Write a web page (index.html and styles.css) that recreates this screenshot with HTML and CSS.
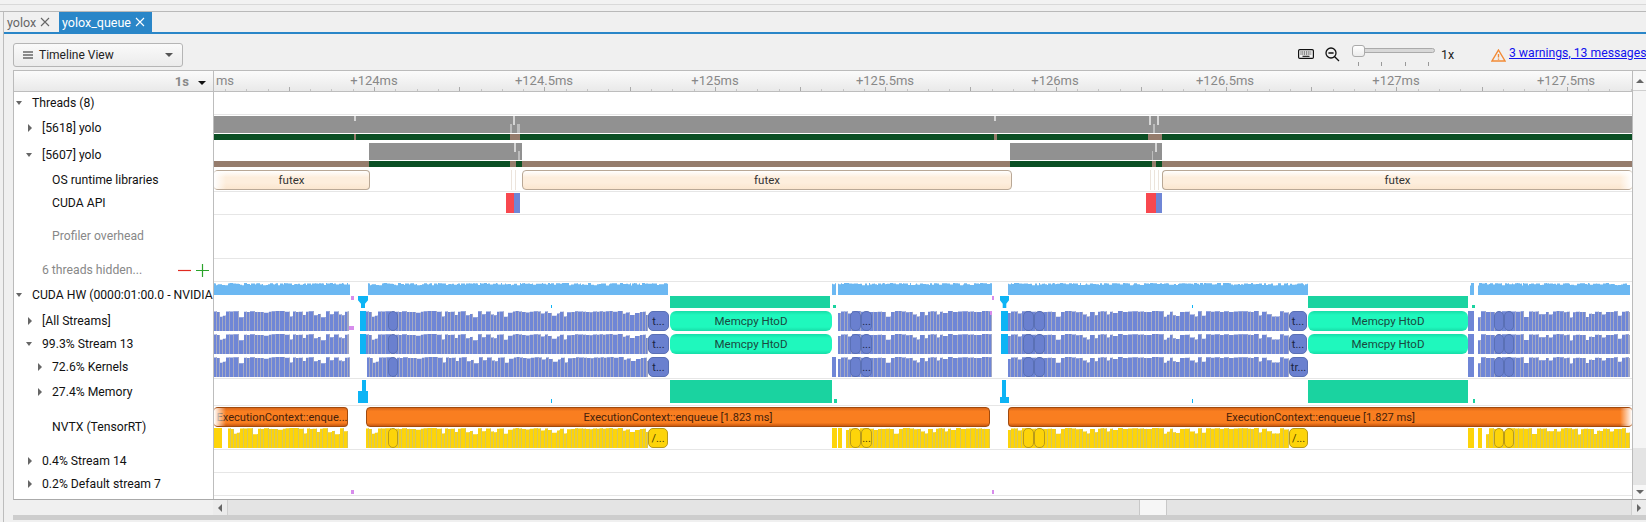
FILE: index.html
```html
<!DOCTYPE html>
<html lang="en">
<head>
<meta charset="utf-8">
<title>yolox_queue - Timeline View</title>
<link rel="stylesheet" href="styles.css">
</head>
<body>
<div class="topstrip"></div>
<div class="frame">
  <div class="tabs">
    <div class="tab">yolox <svg class="tabx" viewBox="0 0 10 10"><path d="M1 1L9 9M9 1L1 9"/></svg></div>
    <div class="tab active">yolox_queue <svg class="tabx" viewBox="0 0 10 10"><path d="M1 1L9 9M9 1L1 9"/></svg></div>
  </div>
  <div class="toolbar">
    <div class="dropdown">
      <svg class="burger" viewBox="0 0 10 8"><path d="M0 1H10M0 4H10M0 7H10"/></svg>
      <span class="dropdown-text">Timeline View</span>
      <span class="dropdown-caret"></span>
    </div>
    <div class="tools">
      <svg class="kbd" viewBox="0 0 16 10"><rect x=".6" y=".6" width="14.8" height="8.8" rx="1.2"/><path class="keys" d="M2.5 3H13.5M2.5 5H13.5"/><path class="keys solid" d="M4.5 7.3H11.5"/></svg>
      <svg class="zoomout" viewBox="0 0 15 15"><circle cx="6" cy="6" r="5"/><path d="M3.4 6H8.6M9.7 9.7L14 14"/></svg>
      <div class="slider">
        <div class="slider-track"></div>
        <div class="slider-thumb"></div>
        <div class="slider-ticks"><i></i><i></i><i></i><i></i></div>
      </div>
      <span class="zoomval">1x</span>
      <svg class="warn" viewBox="0 0 15 13"><path d="M7.5 1L14 12H1Z"/><path d="M7.5 5V8.6M7.5 9.6V10.8"/></svg>
      <a class="msglink" href="#">3 warnings, 13 messages</a>
    </div>
  </div>
  <div class="panel">
    <div class="content">
      <div class="header">
        <div class="scale"><b>1s</b><span class="scale-caret"></span></div>
        <div class="ruler" id="ruler">
          <span class="rlabel" data-center="225">ms</span>
          <span class="rlabel" data-center="374">+124ms</span>
          <span class="rlabel" data-center="544">+124.5ms</span>
          <span class="rlabel" data-center="715">+125ms</span>
          <span class="rlabel" data-center="885">+125.5ms</span>
          <span class="rlabel" data-center="1055">+126ms</span>
          <span class="rlabel" data-center="1225">+126.5ms</span>
          <span class="rlabel" data-center="1396">+127ms</span>
          <span class="rlabel" data-center="1566">+127.5ms</span>
        </div>
      </div>

      <div class="rows">
        <div class="row h23">
          <div class="label l0"><span class="caret down"></span>Threads (8)</div>
          <div class="lane ruled"></div>
        </div>

        <div class="row h27">
          <div class="label l1"><span class="caret right"></span>[5618] yolo</div>
          <div class="lane">
            <div class="track t17 gap">
              <span class="seg grey" data-from="214" data-to="1632"></span>
              <span class="seg notch half" data-from="354" data-to="356"></span>
              <span class="seg notch low" data-from="510" data-to="512"></span>
              <span class="seg notch" data-from="513" data-to="515"></span>
              <span class="seg notch low" data-from="517" data-to="520"></span>
              <span class="seg notch half" data-from="994" data-to="996"></span>
              <span class="seg notch" data-from="1149" data-to="1151"></span>
              <span class="seg notch low" data-from="1153" data-to="1155"></span>
              <span class="seg notch" data-from="1157" data-to="1159"></span>
            </div>
            <div class="track t6">
              <span class="seg dgreen" data-from="214" data-to="1632"></span>
              <span class="seg brown" data-from="354" data-to="356"></span>
              <span class="seg brown" data-from="510" data-to="520"></span>
              <span class="seg brown" data-from="994" data-to="997"></span>
              <span class="seg brown" data-from="1148" data-to="1162"></span>
            </div>
          </div>
        </div>

        <div class="row h27">
          <div class="label l1"><span class="caret down"></span>[5607] yolo</div>
          <div class="lane">
            <div class="track t17 gap">
              <span class="seg grey" data-from="369" data-to="522"></span>
              <span class="seg notch" data-from="514" data-to="516"></span>
              <span class="seg notch low" data-from="518" data-to="520"></span>
              <span class="seg grey" data-from="1010" data-to="1162"></span>
              <span class="seg notch low" data-from="1152" data-to="1153"></span>
              <span class="seg notch" data-from="1155" data-to="1157"></span>
            </div>
            <div class="track t6">
              <span class="seg brown" data-from="214" data-to="1632"></span>
              <span class="seg dgreen" data-from="369" data-to="522"></span>
              <span class="seg dgreen" data-from="1010" data-to="1162"></span>
              <span class="seg brown" data-from="510" data-to="516"></span>
              <span class="seg brown" data-from="1152" data-to="1156"></span>
            </div>
          </div>
        </div>

        <div class="row h23">
          <div class="label l2"><span class="caret"></span>OS runtime libraries</div>
          <div class="lane ruled">
            <div class="track t20">
              <span class="seg futex fade-l" data-from="214" data-to="370">futex</span>
              <span class="seg futex" data-from="522" data-to="1012">futex</span>
              <span class="seg futex fade-r" data-from="1162" data-to="1632">futex</span>
              <span class="seg faint" data-from="511" data-to="512"></span>
              <span class="seg faint" data-from="515" data-to="516"></span>
              <span class="seg faint" data-from="1150" data-to="1151"></span>
              <span class="seg faint" data-from="1154" data-to="1155"></span>
              <span class="seg faint" data-from="1158" data-to="1159"></span>
            </div>
          </div>
        </div>

        <div class="row h23">
          <div class="label l2"><span class="caret"></span>CUDA API</div>
          <div class="lane ruled">
            <div class="track t20">
              <span class="seg red" data-from="506" data-to="514"></span>
              <span class="seg kblue" data-from="514" data-to="520"></span>
              <span class="seg red" data-from="1146" data-to="1156"></span>
              <span class="seg kblue" data-from="1156" data-to="1162"></span>
            </div>
          </div>
        </div>

        <div class="row h44">
          <div class="label l2 dim"><span class="caret"></span>Profiler overhead</div>
          <div class="lane ruled"></div>
        </div>

        <div class="row h23">
          <div class="label l1 dim"><span class="caret"></span>6 threads hidden...
            <span class="hide-ctl">
              <svg class="minus" viewBox="0 0 13 13"><path d="M0 6.5H13"/></svg>
              <svg class="plus" viewBox="0 0 13 13"><path d="M0 6.5H13M6.5 0V13"/></svg>
            </span>
          </div>
          <div class="lane ruled"></div>
        </div>

        <div class="row h28">
          <div class="label l0"><span class="caret down"></span>CUDA HW (0000:01:00.0 - NVIDIA</div>
          <div class="lane">
            <div class="track t12 gap"><svg class="chart" data-kind="util" data-segs="214-350,368-668,832-836,838-992,1008-1308,1470-1474,1478-1630"></svg></div>
            <div class="track t12">
              <span class="seg lilac" data-from="351" data-to="354"></span>
              <span class="seg funnel" data-from="358" data-to="368"></span>
              <span class="seg cyan tiny" data-from="551" data-to="552"></span>
              <span class="seg teal" data-from="670" data-to="830"></span>
              <span class="seg teal tiny" data-from="833" data-to="836"></span>
              <span class="seg lilac" data-from="992" data-to="994"></span>
              <span class="seg funnel" data-from="1000" data-to="1009"></span>
              <span class="seg cyan tiny" data-from="1192" data-to="1193"></span>
              <span class="seg teal" data-from="1308" data-to="1468"></span>
              <span class="seg teal tiny" data-from="1472" data-to="1475"></span>
            </div>
          </div>
        </div>

        <div class="row h23">
          <div class="label l1"><span class="caret right"></span>[All Streams]</div>
          <div class="lane">
            <div class="track t20">
              <svg class="chart" data-kind="kernel" data-segs="214-349,366-648,838-992,1008-1289,1478-1630"></svg>
              <span class="seg lilac lowbit" data-from="349" data-to="354"></span>
              <span class="seg cyan" data-from="360" data-to="366"></span>
              <span class="seg oval" data-from="388" data-to="398"></span>
              <span class="seg oval" data-from="648" data-to="669">t...</span>
              <span class="seg memcpy" data-from="670" data-to="832">Memcpy HtoD</span>
              <span class="seg oval" data-from="850" data-to="861"></span>
              <span class="seg oval" data-from="861" data-to="872">...</span>
              <span class="seg lilac" data-from="990" data-to="992"></span>
              <span class="seg cyan" data-from="1001" data-to="1008"></span>
              <span class="seg oval" data-from="1023" data-to="1034"></span>
              <span class="seg oval" data-from="1034" data-to="1045"></span>
              <span class="seg oval" data-from="1289" data-to="1307">t...</span>
              <span class="seg memcpy" data-from="1308" data-to="1468">Memcpy HtoD</span>
              <span class="seg kblue" data-from="1468" data-to="1474"></span>
              <span class="seg oval" data-from="1494" data-to="1504"></span>
              <span class="seg oval" data-from="1504" data-to="1514"></span>
            </div>
          </div>
        </div>

        <div class="row h23">
          <div class="label l1"><span class="caret down"></span>99.3% Stream 13</div>
          <div class="lane">
            <div class="track t20">
              <svg class="chart" data-kind="kernel" data-segs="214-349,366-648,838-992,1008-1289,1478-1630"></svg>
              <span class="seg cyan" data-from="360" data-to="366"></span>
              <span class="seg oval" data-from="388" data-to="398"></span>
              <span class="seg oval" data-from="648" data-to="669">t...</span>
              <span class="seg memcpy" data-from="670" data-to="832">Memcpy HtoD</span>
              <span class="seg oval" data-from="850" data-to="861"></span>
              <span class="seg oval" data-from="861" data-to="872">...</span>
              <span class="seg cyan" data-from="1001" data-to="1008"></span>
              <span class="seg oval" data-from="1023" data-to="1034"></span>
              <span class="seg oval" data-from="1034" data-to="1045"></span>
              <span class="seg oval" data-from="1289" data-to="1307">t...</span>
              <span class="seg memcpy" data-from="1308" data-to="1468">Memcpy HtoD</span>
              <span class="seg kblue" data-from="1468" data-to="1474"></span>
              <span class="seg oval" data-from="1494" data-to="1504"></span>
              <span class="seg oval" data-from="1504" data-to="1514"></span>
            </div>
          </div>
        </div>

        <div class="row h23">
          <div class="label l2"><span class="caret right"></span>72.6% Kernels</div>
          <div class="lane ruled">
            <div class="track t20">
              <svg class="chart" data-kind="kernel" data-segs="214-350,367-648,838-992,1008-1289,1478-1630"></svg>
              <span class="seg oval" data-from="388" data-to="398"></span>
              <span class="seg oval" data-from="648" data-to="669">t...</span>
              <span class="seg kblue" data-from="832" data-to="836"></span>
              <span class="seg oval" data-from="850" data-to="861"></span>
              <span class="seg oval" data-from="861" data-to="872">...</span>
              <span class="seg oval" data-from="1023" data-to="1034"></span>
              <span class="seg oval" data-from="1034" data-to="1045"></span>
              <span class="seg oval" data-from="1289" data-to="1308">tr...</span>
              <span class="seg kblue" data-from="1468" data-to="1474"></span>
              <span class="seg oval" data-from="1494" data-to="1504"></span>
              <span class="seg oval" data-from="1504" data-to="1514"></span>
            </div>
          </div>
        </div>

        <div class="row h27">
          <div class="label l2"><span class="caret right"></span>27.4% Memory</div>
          <div class="lane ruled">
            <div class="track t23">
              <span class="seg cyan" data-from="362" data-to="366"></span>
              <span class="seg cyan lowhalf" data-from="358" data-to="368"></span>
              <span class="seg cyan tick" data-from="551" data-to="552"></span>
              <span class="seg teal" data-from="670" data-to="832"></span>
              <span class="seg teal tick" data-from="834" data-to="837"></span>
              <span class="seg cyan" data-from="1002" data-to="1006"></span>
              <span class="seg cyan lowbit" data-from="1000" data-to="1009"></span>
              <span class="seg cyan tick" data-from="1192" data-to="1193"></span>
              <span class="seg teal" data-from="1308" data-to="1468"></span>
              <span class="seg teal tick" data-from="1473" data-to="1475"></span>
            </div>
          </div>
        </div>

        <div class="row h44">
          <div class="label l2"><span class="caret"></span>NVTX (TensorRT)</div>
          <div class="lane ruled">
            <div class="track t20 gap">
              <span class="seg orange fade-l clip" data-from="214" data-to="348">ExecutionContext::enque...</span>
              <span class="seg orange" data-from="366" data-to="990">ExecutionContext::enqueue [1.823 ms]</span>
              <span class="seg orange fade-r" data-from="1008" data-to="1632">ExecutionContext::enqueue [1.827 ms]</span>
            </div>
            <div class="track t20">
              <svg class="chart" data-kind="nvtx" data-segs="228-348,366-648,846-990,1008-1289,1486-1630"></svg>
              <span class="seg yellow" data-from="214" data-to="222"></span>
              <span class="seg yoval" data-from="388" data-to="398"></span>
              <span class="seg yoval" data-from="648" data-to="668">/...</span>
              <span class="seg yellow" data-from="832" data-to="837"></span>
              <span class="seg yellow" data-from="838" data-to="842"></span>
              <span class="seg yoval" data-from="850" data-to="861"></span>
              <span class="seg yoval" data-from="861" data-to="872">...</span>
              <span class="seg yoval" data-from="1023" data-to="1034"></span>
              <span class="seg yoval" data-from="1034" data-to="1045"></span>
              <span class="seg yoval" data-from="1289" data-to="1308">/...</span>
              <span class="seg yellow" data-from="1468" data-to="1474"></span>
              <span class="seg yellow" data-from="1478" data-to="1482"></span>
              <span class="seg yoval" data-from="1494" data-to="1504"></span>
              <span class="seg yoval" data-from="1504" data-to="1514"></span>
            </div>
          </div>
        </div>

        <div class="row h23">
          <div class="label l1"><span class="caret right"></span>0.4% Stream 14</div>
          <div class="lane ruled"></div>
        </div>

        <div class="row h23">
          <div class="label l1"><span class="caret right"></span>0.2% Default stream 7</div>
          <div class="lane ruled">
            <div class="track t4 sunk">
              <span class="seg lilac" data-from="351" data-to="354"></span>
              <span class="seg lilac" data-from="992" data-to="994"></span>
            </div>
          </div>
        </div>

        <div class="row rest">
          <div class="label"></div>
          <div class="lane"></div>
        </div>
      </div>
    </div>
    <div class="vscroll">
      <div class="vbtn"><span class="tri-up"></span></div>
      <div class="vthumb"></div>
      <div class="vtrack"></div>
      <div class="vbtn low"><span class="tri-down"></span></div>
    </div>
  </div>
  <div class="hscroll">
    <div class="hbtn"><span class="tri-left"></span></div>
    <div class="htrack"></div>
    <div class="hthumb"></div>
    <div class="htrack end"></div>
    <div class="hbtn end"><span class="tri-right"></span></div>
  </div>
  <div class="footbar"></div>
</div>
<script src="script.js"></script>
</body>
</html>
```
FILE: styles.css
```css
* { box-sizing: border-box; }
html, body { margin: 0; height: 522px; overflow: hidden; }
body {
  background: #f0f0f0;
  font-family: Roboto, "Liberation Sans", sans-serif;
  font-size: 12px;
  color: #111;
  width: 1646px;
}

.topstrip { height: 12px; border-bottom: 1px solid #b9b9b9; background: linear-gradient(#f2f2f2 0 4px, #d9d9d9 4px 5px, #f0f0f0 5px); }
.frame { margin-left: 3px; height: 510px; border-left: 1px solid #bdbdbd; display: flex; flex-direction: column; }

/* tabs */
.tabs { height: 22px; display: flex; border-bottom: 2px solid #2a86c8; padding-left: 0; }
.tab { height: 20px; padding: 0 5px 0 3px; display: flex; align-items: center; gap: 4px; color: #666; font-size: 12.5px; width: 55px; }
.tab.active { background: #2a86c8; color: #fff; width: 93px; padding-left: 3px; }
.tabx { width: 10px; height: 10px; fill: none; stroke: currentColor; stroke-width: 1.1; }

/* toolbar */
.toolbar { height: 36px; display: flex; align-items: flex-start; padding-left: 9px; position: relative; }
.dropdown { margin-top: 9px; width: 170px; height: 24px; border: 1px solid #b5b5b5; border-radius: 3px; background: linear-gradient(#fafafa, #ebebeb); display: flex; align-items: center; padding: 0 9px; }
.burger { width: 10px; height: 8px; fill: none; stroke: #222; stroke-width: 1.1; margin-right: 6px; flex: none; }
.dropdown-text { flex: 1; font-size: 12px; color: #222; }
.dropdown-caret { width: 0; height: 0; border-left: 4px solid transparent; border-right: 4px solid transparent; border-top: 4px solid #555; }

.tools { position: absolute; left: 0; top: 0; width: 100%; height: 36px; pointer-events: none; }
.kbd { position: absolute; left: 1294px; top: 15px; width: 16px; height: 10px; fill: #f4f4f4; stroke: #111; stroke-width: 1.2; }
.keys { fill: none; stroke-width: 1.1; stroke-dasharray: 1 .8; }
.keys.solid { stroke-dasharray: none; }
.zoomout { position: absolute; left: 1321px; top: 13px; width: 15px; height: 15px; fill: none; stroke: #111; stroke-width: 1.3; }
.slider { position: absolute; left: 1348px; top: 11px; width: 84px; height: 22px; }
.slider-track { position: absolute; left: 8px; right: 1px; top: 3px; height: 5px; border: 1px solid #aaa; border-radius: 3px; background: #d8d8d8; }
.slider-thumb { position: absolute; left: 0; top: 0; width: 13px; height: 12px; border: 1px solid #aaa; border-radius: 3px; background: linear-gradient(#fff, #ececec); }
.slider-ticks { position: absolute; left: 6px; width: 71px; top: 17px; display: flex; justify-content: space-between; }
.slider-ticks i { display: block; width: 1px; height: 4px; background: #999; }
.zoomval { position: absolute; left: 1437px; top: 13px; font-size: 12.5px; color: #222; }
.warn { position: absolute; left: 1487px; top: 15px; width: 15px; height: 13px; fill: none; stroke: #f28a35; stroke-width: 1.4; }
.msglink { position: absolute; left: 1505px; top: 12px; font-size: 12.2px; color: #1212ee; white-space: nowrap; text-decoration: underline; }

/* panel */
.panel { margin-left: 9px; height: 430px; border-top: 1px solid #bbb; border-left: 1px solid #bbb; border-bottom: 1px solid #aaa; display: flex; background: #fff; }
.content { flex: 1; min-width: 0; display: flex; flex-direction: column; }
.header { height: 21px; display: flex; border-bottom: 1px solid #bdbdbd; background: linear-gradient(#fbfbfb, #e9e9e9); }
.scale { width: 200px; border-right: 1px solid #bdbdbd; display: flex; justify-content: flex-end; align-items: center; padding-right: 7px; color: #888; font-size: 13px; }
.scale b { margin-right: 9px; }
.scale-caret { width: 0; height: 0; border-left: 4px solid transparent; border-right: 4px solid transparent; border-top: 4px solid #111; margin-top: 3px; }
.ruler { flex: 1; position: relative; overflow: hidden; }
.rlabel { position: absolute; top: 2px; transform: translateX(-50%); font-size: 13px; color: #888; white-space: nowrap; }
.rtick { position: absolute; bottom: 0; width: 1px; height: 2px; background: #c4c4c4; }
.rtick.mid { height: 4px; background: #aaa; }

.rows { flex: 1; display: flex; flex-direction: column; min-height: 0; }
.row { display: flex; flex: none; }
.h23 { height: 23px; }
.h27 { height: 27px; }
.h28 { height: 28px; }
.h44 { height: 44px; }
.rest { flex: 1; }

.label { width: 200px; flex: none; border-right: 1px solid #bdbdbd; padding-bottom: 2px; display: flex; align-items: center; white-space: nowrap; overflow: hidden; font-size: 12.2px; color: #111; position: relative; }
.l0 { padding-left: 2px; }
.l1 { padding-left: 11px; }
.l2 { padding-left: 21px; }
.l0 .caret { width: 16px; }
.dim { color: #888; }
.caret { width: 17px; flex: none; height: 8px; position: relative; }
.caret.down::before { content: ""; position: absolute; left: 0; top: 2px; border-left: 3.5px solid transparent; border-right: 3.5px solid transparent; border-top: 4px solid #666; }
.caret.right::before { content: ""; position: absolute; left: 3px; top: 0; border-top: 4px solid transparent; border-bottom: 4px solid transparent; border-left: 4px solid #666; }
.l1 .caret.down::before, .l2 .caret.down::before { left: 1px; }
.hide-ctl { position: absolute; left: 164px; top: 5px; display: flex; gap: 5px; }
.minus, .plus { width: 13px; height: 13px; fill: none; stroke-width: 1.2; }
.minus { stroke: #e02a20; }
.plus { stroke: #2ba32b; }

.lane { flex: 1; min-width: 0; display: flex; flex-direction: column; padding-top: 1px; position: relative; overflow: hidden; }
.lane.ruled { border-bottom: 1px solid #e6e6e6; }
.track { position: relative; flex: none; }
.t4 { height: 4px; }
.t6 { height: 6px; }
.t12 { height: 12px; }
.t17 { height: 17px; }
.t20 { height: 20px; }
.t23 { height: 23px; }
.gap { margin-bottom: 1px; }
.sunk { margin-top: 16px; }

.chart { position: absolute; left: 0; top: 0; width: 100%; height: 100%; display: block; }
.seg { position: absolute; top: 0; bottom: 0; display: flex; align-items: center; justify-content: center; overflow: hidden; white-space: nowrap; }

.grey { background: #919191; }
.dgreen { background: #0b4f24; }
.brown { background: #957c6c; }
.notch { background: #d6d6d6; bottom: 50%; }
.notch.half { bottom: 70%; }
.notch.low { bottom: 0; top: 45%; background: #bdbdbd; }
.faint { background: #ece4dc; }
.futex { background: linear-gradient(#fff 0, #fdeedd 35%, #fdeedd 65%, #fbe6cf 100%); border: 1px solid #b9a896; border-radius: 4px; font-size: 11.5px; color: #333; padding-bottom: 1px; }
.red { background: #f8484f; }
.kblue { background: #6f86d6; }
.lilac { background: #d78cec; top: auto; height: 4px; bottom: auto; }
.lilac.lowbit { top: 15px; height: 4px; }
.cyan { background: #0db4f5; }
.cyan.tiny { top: 9px; }
.cyan.tick { top: 19px; }
.cyan.lowhalf { top: 11px; }
.cyan.lowbit { top: 17px; }
.funnel { background: #0db4f5; clip-path: polygon(0 0, 100% 0, 100% 35%, 70% 65%, 70% 100%, 30% 100%, 30% 65%, 0 35%); }
.teal { background: #1ad3a0; }
.teal.tiny { top: 9px; }
.teal.tick { top: 19px; }
.memcpy { background: linear-gradient(#17dda8, #1ff8bd 20%, #1ff8bd 80%, #17dda8); border-radius: 6px; font-size: 11.5px; color: #1a4a40; }
.oval { background: #6a80cf; border: 1px solid #5a70b5; border-radius: 5px; font-size: 11px; color: #1b2440; }
.orange { background: linear-gradient(#d9661a, #f97e20 18%, #f97e20 82%, #c9580f); border: 1px solid #a04a0e; border-radius: 4px; font-size: 11.1px; color: #47210a; }
.clip { padding-left: 3px; }
.yellow { background: #fdd40a; }
.yoval { background: #fdd40a; border: 1px solid #b89a1a; border-radius: 5px; font-size: 11px; color: #4a3c00; }
.fade-l::before, .fade-r::after { content: ""; position: absolute; top: 0; bottom: 0; width: 12px; }
.fade-l::before { left: 0; background: linear-gradient(to right, #fff, rgba(255,255,255,0)); }
.fade-r::after { right: 0; background: linear-gradient(to left, #fff, rgba(255,255,255,0)); }
.fade-l { border-left: 0; }
.fade-r { border-right: 0; }

/* scrollbars */
.vscroll { width: 14px; flex: none; border-left: 1px solid #bbb; display: flex; flex-direction: column; background: #f4f4f4; }
.vbtn { height: 20px; display: flex; align-items: center; justify-content: center; background: #f7f7f7; border-bottom: 1px solid #cfcfcf; }
.vbtn.low { height: 14px; border-bottom: 0; }
.vthumb { height: 357px; background: #f5f5f5; }
.vtrack { flex: 1; background: #e4e4e4; }
.tri-up { border-left: 4px solid transparent; border-right: 4px solid transparent; border-bottom: 4px solid #666; }
.tri-down { border-left: 4px solid transparent; border-right: 4px solid transparent; border-top: 4px solid #666; }
.tri-left { border-top: 4px solid transparent; border-bottom: 4px solid transparent; border-right: 4px solid #666; }
.tri-right { border-top: 4px solid transparent; border-bottom: 4px solid transparent; border-left: 4px solid #666; }

.hscroll { height: 15px; margin-left: 209px; display: flex; flex: none; background: #e4e4e4; }
.hbtn { width: 15px; flex: none; display: flex; align-items: center; justify-content: center; background: #ececec; border-right: 1px solid #d0d0d0; }
.hbtn.end { border-right: 0; border-left: 1px solid #d0d0d0; }
.htrack { width: 911px; flex: none; }
.htrack.end { width: auto; flex: 1; }
.hthumb { width: 28px; flex: none; background: #f6f6f6; border-left: 1px solid #c8c8c8; border-right: 1px solid #c8c8c8; }
.footbar { height: 5px; margin-left: 9px; background: #cdcdcd; flex: none; }
```
FILE: script.js
```js
// Places timeline items from their data-from/data-to coordinates and draws the dense charts.
const LANE_ORIGIN = 214;

document.querySelectorAll(".seg").forEach((el) => {
  const from = Number(el.dataset.from);
  const to = Number(el.dataset.to);
  el.style.left = from - LANE_ORIGIN + "px";
  el.style.width = to - from + "px";
});

const ruler = document.getElementById("ruler");
ruler.querySelectorAll(".rlabel").forEach((el) => {
  el.style.left = Number(el.dataset.center) - LANE_ORIGIN + "px";
});
for (let i = -8; i < 66; i++) {
  const x = 374 + i * 21.3 - LANE_ORIGIN;
  if (x < 0 || x > 1418) continue;
  const tick = document.createElement("span");
  tick.className = i % 4 === 0 ? "rtick mid" : "rtick";
  tick.style.left = Math.round(x) + "px";
  ruler.appendChild(tick);
}

function rng(seed) {
  let s = seed >>> 0;
  return () => {
    s = (s * 1664525 + 1013904223) >>> 0;
    return s / 4294967296;
  };
}

const KINDS = {
  kernel: { fill: "#6f86d6", sep: "#a4a9c4", min: 0.68, minW: 3, spanW: 3, solid: 0.55 },
  nvtx: { fill: "#fdd40a", sep: "#d6c65e", min: 0.68, minW: 3, spanW: 3, solid: 0.55 },
  util: { fill: "#6cb8f2", sep: null, min: 0.8, minW: 1, spanW: 3, solid: 0.35 },
};

function drawChart(svg) {
  const kind = KINDS[svg.dataset.kind];
  const h = svg.parentElement.clientHeight;
  const ns = "http://www.w3.org/2000/svg";
  let fill = "";
  let sep = "";
  svg.dataset.segs.split(",").forEach((pair) => {
    const [a, b] = pair.split("-").map(Number);
    const rand = rng(Math.floor(a / 640) * 37 + 11);
    let x = a;
    while (x < b) {
      const w = Math.min(b - x, kind.minW + Math.floor(rand() * kind.spanW));
      const solid = rand() < kind.solid;
      const tall = solid ? 1 - rand() * 0.06 : kind.min + rand() * (1 - kind.min);
      const top = Math.round(h * (1 - tall) * 10) / 10;
      const px = x - LANE_ORIGIN;
      fill += `M${px} ${h}V${top}H${px + w}V${h}Z`;
      if (kind.sep) sep += `M${px + w - 0.5} ${top}V${h}`;
      x += w;
    }
  });
  svg.setAttribute("viewBox", `0 0 ${svg.clientWidth} ${h}`);
  const f = document.createElementNS(ns, "path");
  f.setAttribute("d", fill);
  f.setAttribute("fill", kind.fill);
  svg.appendChild(f);
  if (kind.sep) {
    const s = document.createElementNS(ns, "path");
    s.setAttribute("d", sep);
    s.setAttribute("stroke", kind.sep);
    s.setAttribute("fill", "none");
    svg.appendChild(s);
  }
}

document.querySelectorAll(".chart").forEach(drawChart);
```
